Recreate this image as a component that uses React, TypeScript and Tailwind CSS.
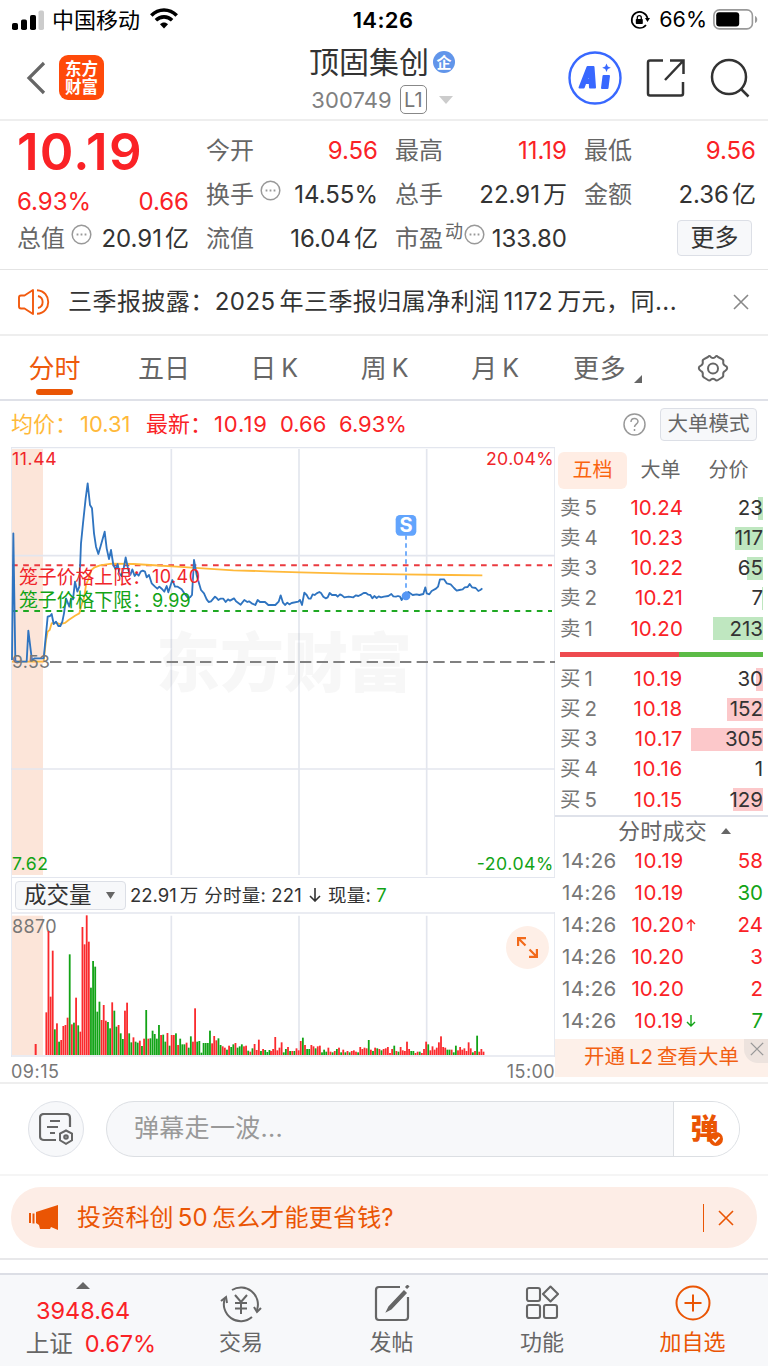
// App.tsx
import React from 'react';

type Cell = { label: string; value: string; unit?: string; red?: boolean; info?: boolean; sup?: string };

const columns: Cell[][] = [
  [
    { label: '今开', value: '9.56', red: true },
    { label: '换手', value: '14.55%', info: true },
    { label: '流值', value: '16.04', unit: '亿' },
  ],
  [
    { label: '最高', value: '11.19', red: true },
    { label: '总手', value: '22.91', unit: '万' },
    { label: '市盈', value: '133.80', info: true, sup: '动' },
  ],
];

const asks = [
  { n: '5', price: '10.24', vol: '23', w: 5 },
  { n: '4', price: '10.23', vol: '117', w: 28 },
  { n: '3', price: '10.22', vol: '65', w: 16 },
  { n: '2', price: '10.21', vol: '7', w: 1 },
  { n: '1', price: '10.20', vol: '213', w: 50 },
];

const bids = [
  { n: '1', price: '10.19', vol: '30', w: 7 },
  { n: '2', price: '10.18', vol: '152', w: 36 },
  { n: '3', price: '10.17', vol: '305', w: 72 },
  { n: '4', price: '10.16', vol: '1', w: 0 },
  { n: '5', price: '10.15', vol: '129', w: 30 },
];

const trades = [
  { price: '10.19', vol: '58', up: true, arrow: '' },
  { price: '10.19', vol: '30', up: false, arrow: '' },
  { price: '10.20', vol: '24', up: true, arrow: 'up' },
  { price: '10.20', vol: '3', up: true, arrow: '' },
  { price: '10.20', vol: '2', up: true, arrow: '' },
  { price: '10.19', vol: '7', up: false, arrow: 'down' },
];

// Price line, three units per pixel
const priceLine =
  '36,660 40,280 46,662 50,665 80,665 85,572 96,662 103,655 131,655 143,530 150,528 155,522 161,552 168,545 175,558 181,558 187,545 192,520 198,475 208,500 213,475 219,478 225,425 232,455 238,440 243,310 249,250 257,175 263,130 270,195 276,205 282,280 288,320 295,342 302,318 314,275 320,325 327,357 333,330 340,375 347,388 353,372 358,400 364,408 371,385 377,352 385,390 391,405 397,388 404,408 410,400 416,407 422,395 428,392 435,395 440,412 447,405 455,430 465,440 472,446 478,440 486,447 493,455 500,438 505,457 517,420 525,440 533,440 545,448 553,460 565,475 570,472 576,465 582,360 590,405 597,430 603,450 612,460 620,478 626,486 633,484 645,470 650,474 655,480 661,476 670,476 677,486 684,478 690,482 702,475 708,484 722,494 733,480 742,486 747,484 755,490 766,495 773,480 780,486 795,486 805,495 826,495 836,485 842,466 849,488 855,495 862,488 868,493 875,489 895,485 900,480 906,495 913,458 920,465 926,476 932,476 938,463 944,465 950,460 958,456 963,459 970,470 977,475 983,472 989,459 996,465 1008,465 1013,470 1020,463 1026,466 1033,472 1046,470 1060,472 1068,466 1075,468 1085,463 1091,459 1098,459 1105,464 1111,465 1117,475 1123,468 1130,474 1136,469 1143,472 1152,470 1165,468 1174,462 1180,469 1188,470 1194,468 1200,470 1205,480 1212,465 1225,456 1238,465 1250,463 1258,465 1270,462 1276,442 1280,460 1288,463 1295,453 1308,446 1314,440 1320,418 1332,418 1340,430 1352,433 1362,444 1370,452 1378,450 1388,448 1394,442 1403,441 1409,432 1416,442 1427,444 1435,453 1441,450 1447,445';

const avgLine =
  '36,665 131,665 138,600 143,575 149,570 155,550 168,548 180,552 195,549 206,540 225,527 238,520 246,490 252,475 258,435 266,415 274,390 284,382 300,376 335,371 400,372 450,375 530,380 620,386 700,391 800,394 900,397 1050,401 1200,403 1350,405 1447,406';

// Volume bars: colour letter followed by height
const volumeA =
  'r128 r372 r175 r313 g77 r95 g40 r45 r87 r90 r112 g302 r92 g97 r172 g89 r70 r384 r332 r419 r340 g202 g282 g265 g130 g160 r105 r150 r103 g99 g80 r158 g133 g85 r90 g65 g48 r133 r157 g65 g38 r53 g40 g37 r43 g27 r49 g135 r49 g50 g73 g63 g49 g90 r60 g61 g40 r66 g28 r60 r60 g65 r30 g49 g32 g32 r37 g22 g56 r40 r140 g40 g42 g7 g36 g36 g36 g73 r35 r57 r44 g50 g30 r26 r22 g16 r28 g24 g32 r36 g22 g26 g32 r26 r28 g13 r10 g20 r33 r15 r46 g12 r18 g15 g9 g15';
const volumeB =
  'r12 r18 r54 r14 r22 r38 g8 g18 r24 g12 r12 g12 r20 r14 r42 g52 r30 g18 g18 r30 r26 g20 r26 r28 g8 g16 g10 r22 r10 g8 r12 g18 r22 g8 r16 g8 r12 g8 r12 r14 r10 g8 r24 r18 r22 r20 g45 r16 g12 r22 g20 r18 g14 r18 r20 r24 r6 r18 g28 r12 g10 r24 r14 r12 r40 r18 g12 g12 r6 r10 g10 r6 r18 r40 g32 r14 r26 r16 r22 r38 r56 r24 r22 g16 g16 r16 g8 g28 r14 r24 r16 r20 r12 r38 r20 g8 r12 g58 r10 r18 r10';

const Bars = ({ data, start }: { data: string; start: number }) => (
  <>
    {data.split(' ').map((bar, i) => {
      const h = Number(bar.slice(1));
      return (
        <rect key={i} x={start + i * 6.375 - 2.7} y={585 - h} width={5.4} height={h} fill={bar[0] === 'r' ? '#fa2a2d' : '#12a316'} />
      );
    })}
  </>
);

const InfoDot = () => (
  <svg width="21" height="21" viewBox="0 0 21 21" fill="none" stroke="#999" strokeWidth="1.5">
    <circle cx="10.5" cy="10.5" r="9.3" />
    <path d="M5.6 10.5h1.8M9.6 10.5h1.8M13.6 10.5h1.8" strokeWidth="1.9" />
  </svg>
);

const Cross = ({ size, color }: { size: number; color: string }) => (
  <svg width={size} height={size} viewBox="0 0 16 16" stroke={color} strokeWidth="1.6" fill="none">
    <path d="M1 1l14 14M15 1L1 15" />
  </svg>
);

const QuoteCell = ({ label, value, unit, red, info, sup }: Cell) => (
  <div className="flex h-11 items-center justify-between">
    <div className="flex items-center text-[#666]">
      <span>{label}</span>
      {sup && <span className="-mt-3.5 ml-0.5 text-[18px]">{sup}</span>}
      {info && <span className={sup ? '-mt-2.5 ml-px' : '-mt-2.5 ml-1.5'}><InfoDot /></span>}
    </div>
    <div className={red ? 'text-[#fa2226]' : 'text-[#333]'}>
      {value}
      {unit && <span className="ml-[3px]">{unit}</span>}
    </div>
  </div>
);

const StatusBar = () => (
  <div className="flex h-10 items-center justify-between pr-2.5 pl-3 text-black">
    <div className="flex w-[300px] items-center">
      <svg width="32" height="21" viewBox="0 0 32 21">
        <rect x="0" y="13" width="6" height="7" rx="1.8" />
        <rect x="9" y="9.500" width="6" height="10.500" rx="1.8" />
        <rect x="18" y="5" width="6" height="15" rx="1.8" />
        <rect x="26.500" y="0.500" width="5.500" height="19.500" rx="1.800" fill="#ccc" />
      </svg>
      <span className="ml-2 text-[22px]">中国移动</span>
      <svg className="-mt-1 ml-2.5" width="28" height="21" viewBox="0 0 28 21" fill="none" stroke="#000" strokeWidth="3.600">
        <path d="M1.300 7.500C8.500 0.200 19.500 0.200 26.700 7.500" />
        <path d="M5.900 12.200c4.700-4.400 11.500-4.400 16.200 0" />
        <path d="M10 16.200c2.400-2.200 5.600-2.200 8 0L14 20.500z" fill="#000" stroke="none" />
      </svg>
    </div>
    <div className="-ml-1 text-[22px] font-semibold tracking-[0.4px]">14:26</div>
    <div className="flex w-[300px] items-center justify-end">
      <svg width="20" height="20" viewBox="0 0 20 20" fill="none" stroke="#000" strokeWidth="1.700">
        <path d="M17.500 8A8 8 0 1 0 16 15" />
        <path d="M15 8h5l-2.500 4z" fill="#000" stroke="none" />
        <rect x="5.800" y="9" width="7" height="5" rx="0.800" fill="#000" stroke="none" />
        <path d="M7.300 9.500V7.700a2 2 0 0 1 4 0v1.800" strokeWidth="1.300" />
      </svg>
      <span className="ml-[9px] text-[21.500px]">66%</span>
      <svg className="-mt-0.5 ml-1.5" width="45" height="21" viewBox="0 0 45 21">
        <rect x="0.900" y="0.900" width="38.500" height="19" rx="5.500" fill="none" stroke="#999" strokeWidth="1.600" />
        <rect x="3.200" y="3.300" width="23" height="14.300" rx="3" />
        <path d="M42 7c3 1 3 6 0 7z" fill="#999" />
      </svg>
    </div>
  </div>
);

const Header = () => (
  <header className="flex h-[81px] items-center justify-between border-b-2 border-[#eee] pr-[18px] pb-1 pl-[26px]">
    <div className="flex w-[230px] items-center">
      <svg width="20" height="34" viewBox="0 0 20 34" fill="none" stroke="#666" strokeWidth="3.200">
        <path d="M18 2L3 17l15 15" />
      </svg>
      <div className="ml-[13px] flex h-[45px] w-[45px] flex-col items-center justify-center rounded-[9px] bg-[#ff4a0a] text-[16.500px] leading-[18px] font-bold text-white">
        <span>东方</span>
        <span>财富</span>
      </div>
    </div>
    <div className="mt-1.5 mr-3 flex flex-col items-center">
      <div className="flex items-center text-[30px] text-[#333]">
        <span>顶固集创</span>
        <span className="ml-1 flex h-[22px] w-[22px] items-center justify-center rounded-full bg-[#6195ea] text-[15px] font-bold text-white">企</span>
      </div>
      <div className="mt-2 flex items-center text-[22px] text-[#808080]">
        <span className="tracking-[0.1px]">300749</span>
        <span className="ml-2 flex h-[29px] w-[27px] items-center justify-center rounded-[5px] border-[1.500px] border-[#888] text-[20px] text-[#777]">L1</span>
        <svg className="ml-3" width="14" height="8" viewBox="0 0 14 8"><path d="M0 0h14L7 8z" fill="#ccc" /></svg>
      </div>
    </div>
    <div className="flex w-[230px] items-center justify-end gap-6">
      <svg width="54" height="54" viewBox="0 0 54 54">
        <circle cx="27" cy="27" r="25.500" fill="#fff" stroke="#3868ff" strokeWidth="2.400" />
        <g fill="#3868ff" stroke="#3868ff" strokeLinejoin="round">
          <path d="M11.500 36.500L19.500 16h6l1.500 20.500h-5l-.2-4.500h-4.500l-1.600 4.500zM18.500 28.500h3.300l-.3-7z" strokeWidth="2" fillRule="evenodd" />
          <path d="M35.500 25h5.500l-1.500 12H34z" strokeWidth="2" />
        </g>
        <path d="M38.500 12.500l1.300 2.900 3 1.300-3 1.300-1.300 3-1.300-3-3-1.300 3-1.300z" fill="#3868ff" />
      </svg>
      <svg width="40" height="40" viewBox="0 0 40 40" fill="none" stroke="#333" strokeWidth="2.500">
        <path d="M17 2.500H4Q2 2.500 2 4.500v31q0 2 2 2h31q2 0 2-2V24" />
        <path d="M24 2.500h13.500V16M37 3L19 22" />
      </svg>
      <svg width="40" height="40" viewBox="0 0 40 40" fill="none" stroke="#333" strokeWidth="2.500">
        <circle cx="19" cy="19" r="17" />
        <path d="M30.500 30.500l8 8" />
      </svg>
    </div>
  </header>
);

const Quote = () => (
  <section className="flex h-[149px] gap-[17px] border-b border-[#e4e4e4] pr-3 pl-[17px] pt-2 text-[24px]">
    <div className="w-[172px] text-[#fa2226]">
      <div className="flex h-[45px] items-center text-[51px] font-semibold tracking-[1.200px]">10.19</div>
      <div className="mt-[7px] flex h-[42px] items-center justify-between">
        <span>6.93%</span>
        <span>0.66</span>
      </div>
      <div className="-mt-1.5">
        <QuoteCell label="总值" value="20.91" unit="亿" info />
      </div>
    </div>
    {columns.map((cells, i) => (
      <div key={i} className="w-[172px]">
        {cells.map((cell) => <QuoteCell key={cell.label} {...cell} />)}
      </div>
    ))}
    <div className="w-[172px]">
      <QuoteCell label="最低" value="9.56" red />
      <QuoteCell label="金额" value="2.36" unit="亿" />
      <div className="flex h-11 items-center justify-end pb-0.5">
        <button className="mr-1 h-9 w-[75px] rounded-[4px] border border-[#dcdfe6] bg-[#f7f8fa] text-[24px] text-[#333]">更多</button>
      </div>
    </div>
  </section>
);

const Notice = () => (
  <div className="flex h-[66px] items-center border-b-2 border-[#eee] pr-[19px] pl-[18px] text-[24px] text-[#333]">
    <svg width="32" height="28" viewBox="0 0 32 28" fill="none" stroke="#f25a0e" strokeWidth="1.900">
      <path d="M15 2v24l-8.500-5.500H3Q1 20.500 1 18.500v-9Q1 7.500 3 7.500h3.500z" strokeLinejoin="round" />
      <path d="M20 8a6.200 6.200 0 0 1 0 12" />
      <path d="M19 2.200c15 1 15 22.600 0 23.600" />
    </svg>
    <span className="ml-[18px] tracking-[0.450px] whitespace-nowrap">
      三季报披露：<span className="mr-1">2025</span>年三季报归属净利润<span className="mx-1">1172</span>万元，同...
    </span>
    <span className="ml-auto"><Cross size={16} color="#888" /></span>
  </div>
);

const Tabs = () => (
  <nav className="flex h-[65px] border-b-2 border-[#dfe1e8] text-[26px] text-[#666]">
    <div className="relative flex w-[109px] items-center justify-center pt-0.5 text-[#ee5a0c]">
      分时
      <span className="absolute bottom-1 h-1.5 w-[37px] rounded-full bg-[#ea5504]" />
    </div>
    <div className="flex w-[110px] items-center justify-center pt-0.5">五日</div>
    {['日', '周', '月'].map((t) => (
      <div key={t} className="flex w-[110.500px] items-center justify-center pt-0.5">
        {t}<span className="ml-[5px] text-[25px]">K</span>
      </div>
    ))}
    <div className="flex w-[91px] items-center justify-end pt-0.5 tracking-[0.800px]">
      更多
      <svg className="mt-5 ml-[7px]" width="8" height="8" viewBox="0 0 8 8"><path d="M8 0v8H0z" fill="#666" /></svg>
    </div>
    <div className="flex flex-1 items-center justify-center pt-0.5 pl-4">
      <svg width="32" height="30" viewBox="0 0 32 30" fill="none" stroke="#666" strokeWidth="2">
        <path d="M11 3q1.500-2 3 .2 2 1.500 4 0 1.500-2.200 3-.2l4 2.200q1.800.8 1.200 3-.2 2.500 2 3.500 2 .6 2 2.300t-2 2.800q-2.300 1-2 3.500.5 2.400-1.200 3.200l-4 2.500q-1.500 1.200-3-.5-2-1.500-4 0-1.500 1.700-3 .5l-4-2.500q-1.700-.8-1.200-3.200.3-2.500-2-3.500-2-1-2-2.800t2-2.300q2.200-1 2-3.500-.6-2.200 1.200-3z" strokeLinejoin="round" />
        <circle cx="16" cy="14.500" r="5" />
      </svg>
    </div>
  </nav>
);

const PriceChart = () => (
  <svg className="block" width="544" height="430" viewBox="33 21 1632 1290">
    <rect x="36" y="27" width="93" height="1278" fill="#fce5d9" />
    <g stroke="#e3e6ee" fill="none">
      <path d="M34 21v1290M1664 21v1290" strokeWidth="3" />
      <path d="M33 22h1632" strokeWidth="5" />
      <path d="M33 347h1632M33 987h1632M514 27v1278M897 27v1278M1280 27v1278" strokeWidth="5" />
    </g>
    <text x="468" y="738" fontSize="192" fontWeight="900" textLength="768" fill="#777" fillOpacity="0.060">东方财富</text>
    <path d="M150 666h1515" stroke="#808080" strokeWidth="6" strokeDasharray="34 16" />
    <path d="M36 376h1620" stroke="#ea3a3f" strokeWidth="6" strokeDasharray="17 16.500" />
    <path d="M36 513h1620" stroke="#1fa823" strokeWidth="6" strokeDasharray="17 16.500" />
    <polyline points={avgLine} fill="none" stroke="#ffb93a" strokeWidth="5.500" />
    <polyline points={priceLine} fill="none" stroke="#2f74c0" strokeWidth="5.500" strokeLinejoin="round" />
    <path d="M1218 286v170" stroke="#5ba0fb" strokeWidth="5" strokeDasharray="13 11" />
    <circle cx="1218" cy="468" r="13" fill="#5597f5" />
    <rect x="1187" y="225" width="62" height="62" rx="13" fill="#62a4fd" />
    <text x="1218" y="277" fontSize="60" fontWeight="700" textAnchor="middle" fill="#fff">S</text>
    <g fontSize="53">
      <text x="36" y="75" textLength="134" fill="#f0252a">11.44</text>
      <text x="1458" y="75" textLength="203" fill="#f0252a">20.04%</text>
      <text x="36" y="683" textLength="114" fill="#777">9.53</text>
      <text x="36" y="1289" textLength="108" fill="#12a316">7.62</text>
      <text x="1430" y="1289" textLength="230" fill="#12a316">-20.04%</text>
      <text x="57" y="431" fontSize="56.500" fill="#f0252a">笼子价格上限：</text>
      <text x="456" y="430" fontSize="54" textLength="144" fill="#f0252a">10.40</text>
      <text x="57" y="501" fontSize="56.500" fill="#12a316">笼子价格下限：</text>
      <text x="456" y="500" fontSize="54" textLength="116" fill="#12a316">9.99</text>
    </g>
  </svg>
);

const VolumeChart = () => (
  <div className="relative">
    <svg className="block" width="544" height="145" viewBox="33 156 1632 435">
      <rect x="36" y="167" width="93" height="418" fill="#fce5d9" />
      <g stroke="#e3e6ee" fill="none">
        <path d="M34 156v435M1664 156v435" strokeWidth="3" />
        <path d="M33 159h1632M33 588h1632M514 167v420M897 167v420M1280 167v420" strokeWidth="5" />
      </g>
      <text x="36" y="220" fontSize="54" textLength="134" fill="#777">8870</text>
      <rect x="104" y="552" width="6" height="33" fill="#fa2a2d" />
      <Bars data={volumeA} start={139} />
      <Bars data={volumeB} start={813} />
    </svg>
    <button className="absolute top-3.5 right-1.5 flex h-[43px] w-[43px] items-center justify-center rounded-full bg-[#feefe7]">
      <svg width="21" height="21" viewBox="0 0 21 21" fill="none" stroke="#f26a1b" strokeWidth="2.200">
        <path d="M1.100 9V1.100H9M1.500 1.500l7 7M12 19.900h7.900V12M19.500 19.500l-7-7" />
      </svg>
    </button>
  </div>
);

const priceTracking = (price: string) => (price.includes('.1') ? 'tracking-[0.700px]' : 'tracking-[0.100px]');

const BookRow = ({ side, n, price, vol, w }: { side: string; n: string; price: string; vol: string; w: number }) => (
  <div className="flex h-[30.200px] items-center text-[20.500px] text-[#777]">
    <span className="w-[51px]">{side}<span className="ml-1">{n}</span></span>
    <span className={`w-[72px] text-right text-[#fa2226] ${priceTracking(price)}`}>{price}</span>
    <div className="relative flex h-[23px] flex-1 items-center justify-end text-[#333]">
      <span className={`absolute right-0 h-full ${side === '卖' ? 'bg-[#bfe7c0]' : 'bg-[#fcc8ca]'}`} style={{ width: w }} />
      <span className="relative">{vol}</span>
    </div>
  </div>
);

const OrderPanel = () => (
  <aside className="w-[213px]">
    <div className="flex h-[46px] items-center pl-[3px] text-[20px] text-[#666]">
      <span className="flex h-[37px] w-[69px] items-center justify-center rounded-md bg-[#ffede4] text-[#fa640f]">五档</span>
      <span className="flex w-[67px] justify-center">大单</span>
      <span className="flex w-[69px] justify-center">分价</span>
    </div>
    <div className="pr-[5px] pl-[5px]">
      {asks.map((r) => <BookRow key={r.n} side="卖" {...r} />)}
      <div className="mt-2 mb-[7px] flex h-[5px]">
        <span className="w-[119px] bg-[#ee4a4f]" />
        <span className="flex-1 bg-[#5cbb47]" />
      </div>
      {bids.map((r) => <BookRow key={r.n} side="买" {...r} />)}
    </div>
    <div className="flex h-[30px] items-center justify-center border-t-2 border-[#dfe2ea] pl-[26px] text-[22px] text-[#666]">
      <span className="tracking-[0.300px]">分时成交</span>
      <svg className="ml-3.5" width="10" height="6" viewBox="0 0 10 6"><path d="M0 6h10L5 0z" fill="#666" /></svg>
    </div>
    {trades.map((t, i) => (
      <div key={i} className="flex h-8 items-center pr-[5px] pl-[7px] text-[20.500px]">
        <span className="w-[53px] tracking-[0.400px] text-[#777]">14:26</span>
        <span className={`w-[69px] text-right text-[#fa2226] ${priceTracking(t.price)}`}>{t.price}</span>
        <span className="w-3 pl-0.5">
          {t.arrow && (
            <svg width="10" height="12" viewBox="0 0 10 12" fill="none" strokeWidth="1.400" stroke={t.arrow === 'up' ? '#fa2226' : '#12a316'}>
              <path d={t.arrow === 'up' ? 'M5 12V1M1 5l4-4 4 4' : 'M5 0v11M1 7l4 4 4-4'} />
            </svg>
          )}
        </span>
        <span className={`flex-1 text-right ${t.up ? 'text-[#fa2226]' : 'text-[#12a316]'}`}>{t.vol}</span>
      </div>
    ))}
    <div className="relative mt-0.5 flex h-[38px] items-center justify-center bg-[#fdf0e9] pb-0.5 text-[20.500px] text-[#f26012]">
      <span>开通<span className="mx-1">L2</span>查看大单</span>
      <span className="absolute top-0 right-0 flex h-6 w-6 items-center justify-center rounded-bl-[14px] bg-[#ede3de] pb-1 pl-0.5">
        <Cross size={14} color="#999" />
      </span>
    </div>
  </aside>
);

const Market = () => (
  <section className="h-[683px] border-b-2 border-[#eee]">
    <div className="flex h-[46px] items-center pr-[11px] pl-[11px] text-[22px] text-[#fa2226]">
      <span className="w-[135px] whitespace-nowrap text-[#ffb93a]"><span className="mr-[3px]">均价：</span>10.31</span>
      <span className="w-[134px] whitespace-nowrap"><span className="mr-0.5">最新：</span><span className="tracking-[0.900px]">10.19</span></span>
      <span className="w-[59px]">0.66</span>
      <span>6.93%</span>
      <svg className="mr-3.5 ml-auto" width="23" height="23" viewBox="0 0 23 23" fill="none" stroke="#999" strokeWidth="1.500">
        <circle cx="11.500" cy="11.500" r="10.500" />
        <path d="M8 9c0-4.500 7-4.500 7-.5 0 2.500-3.500 2.800-3.500 5.500M11.500 16v2" />
      </svg>
      <span className="flex h-[33px] w-[97px] items-center justify-center rounded-[4px] border border-[#dcdfe6] bg-[#f7f8fa] text-[20.500px] text-[#666]">大单模式</span>
    </div>
    <div className="flex">
      <div className="w-[555px] pl-[11px]">
        <PriceChart />
        <div className="flex h-[35px] items-center border-t border-l border-[#e3e6ee] pl-[3px] text-[18.500px] whitespace-nowrap text-[#333]">
          <span className="flex h-[29px] w-[111px] items-center justify-between rounded-[4px] border border-[#dcdfe6] bg-[#f7f8fa] pr-2.5 pl-2 text-[22.500px]">
            成交量
            <svg width="9" height="7" viewBox="0 0 9 7"><path d="M0 0h9L4.500 7z" fill="#666" /></svg>
          </span>
          <span className="ml-1">22.91<span className="ml-[3px]">万</span></span>
          <span className="ml-1.5 tracking-[0.200px]">分时量: 221</span>
          <svg className="mx-[7px]" width="12" height="14" viewBox="0 0 12 14" fill="none" stroke="#333" strokeWidth="1.600"><path d="M6 0v13M1 8l5 5 5-5" /></svg>
          <span className="tracking-[0.200px]">现量: <span className="text-[#12a316]">7</span></span>
        </div>
        <VolumeChart />
        <div className="flex h-[25px] items-center justify-between pt-1 text-[18px] text-[#777]">
          <span className="tracking-[0.500px]">09:15</span>
          <span className="tracking-[0.400px]">15:00</span>
        </div>
      </div>
      <OrderPanel />
    </div>
  </section>
);

const Barrage = () => (
  <div className="flex h-[92px] items-center border-b-2 border-[#f5f5f5] pr-7 pl-7">
    <div className="flex h-14 w-14 items-center justify-center rounded-full border border-[#dfe2e8] bg-[#f7f8fa]">
      <svg width="34" height="32" viewBox="0 0 34 32" fill="none" stroke="#666" strokeWidth="2.200">
        <path d="M17 27H5q-4 0-4-4V5q0-4 4-4h22q4 0 4 4v9" />
        <path d="M11 8h10M8 14h11M11 20h5" />
        <path d="M27 17.500l6 3.200v6.600l-6 3.500-6-3.500v-6.600z" strokeWidth="2" />
        <circle cx="27" cy="24" r="1.700" />
      </svg>
    </div>
    <div className="ml-[22px] flex h-14 flex-1 overflow-hidden rounded-full border border-[#dcdfe3] bg-[#f7f8fa]">
      <div className="flex flex-1 items-center border-r border-[#dcdfe3] pb-0.5 pl-[27px] text-[25px] tracking-[0.300px] text-[#999]">弹幕走一波...</div>
      <div className="relative flex w-[65px] items-center justify-center bg-white pr-1 text-[28px] font-black text-[#ea5504]">
        弹
        <svg className="absolute right-4 bottom-2.5" width="14" height="14" viewBox="0 0 14 14">
          <circle cx="7" cy="7" r="7" fill="#ea5504" />
          <path d="M3.500 7l2.700 2.700 4.300-4.500" fill="none" stroke="#fff" strokeWidth="1.700" />
        </svg>
      </div>
    </div>
  </div>
);

const Banner = () => (
  <div className="h-[84px] border-b-2 border-[#e8e8ea] px-[11px] pt-[11px]">
    <div className="flex h-[61px] items-center rounded-[30px] bg-[#fdede6] pr-[23px] pl-[18px] text-[24px] text-[#ea5504]">
      <svg width="30" height="25" viewBox="0 0 30 25" fill="#ea5504">
        <path d="M0 8h2v10H0zM3.500 8.500h2v10h-2zM7 7l22-7v25l-7-3-1 2H11l-1-4-3-2z" />
      </svg>
      <span className="ml-[18px] tracking-[0.200px]">投资科创<span className="mx-1">50</span>怎么才能更省钱?</span>
      <span className="mr-3.5 ml-auto h-7 w-px bg-[#ea5504]" />
      <Cross size={16} color="#ea5504" />
    </div>
  </div>
);

const BottomNav = () => (
  <footer className="mt-[13px] flex h-[93px] border-t-2 border-[#dcdee5] bg-[#f7f8fa] text-[#666]">
    <div className="flex w-[166px] flex-col items-center pt-[7px] text-[23.500px] text-[#fa2226]">
      <svg width="14" height="7" viewBox="0 0 14 7"><path d="M0 7h14L7 0z" fill="#666" /></svg>
      <span className="mt-2.5">3948.64</span>
      <span className="mt-[9px] ml-4 whitespace-nowrap"><span className="mr-3 text-[#666]">上证</span>0.67%</span>
    </div>
    <div className="flex w-[150px] flex-col items-center pt-2.5">
      <svg width="42" height="38" viewBox="0 0 42 38" fill="none" stroke="#666" strokeWidth="2">
        <path d="M12 5A17 17 0 0 1 37 25M32 32A17 17 0 0 1 5 13" />
        <path d="M1 16l5-4 1 6M41 23l-4 4-3-5M15 10l6 7 6-7M21 17v12M15 18h12M15 23.500h12" />
      </svg>
      <span className="mt-2 text-[22px]">交易</span>
    </div>
    <div className="flex w-[151px] flex-col items-center pt-[10px]">
      <svg width="36" height="37" viewBox="0 0 36 37" fill="none" stroke="#666" strokeWidth="2.200">
        <path d="M26 2H5Q2 2 2 5v27q0 3 3 3h26q3 0 3-3V12" />
        <path d="M30 6l-15 16-2 4 4-2L32 8z" fill="#666" strokeWidth="1.500" />
        <path d="M32 3l2.500-2.500" strokeWidth="3" />
      </svg>
      <span className="mt-[9px] text-[22px]">发帖</span>
    </div>
    <div className="flex w-[150px] flex-col items-center pt-[10px]">
      <svg width="34" height="36" viewBox="0 0 34 36" fill="none" stroke="#666" strokeWidth="2.100">
        <rect x="2" y="3" width="13" height="13" rx="2" />
        <rect x="2" y="20" width="13" height="13" rx="2" />
        <rect x="19" y="20" width="13" height="13" rx="2" />
        <path d="M25.500 1.500L33 9l-7.500 7.500L18 9z" strokeLinejoin="round" />
      </svg>
      <span className="mt-[10px] text-[22px]">功能</span>
    </div>
    <div className="flex w-[151px] flex-col items-center pt-[10px] text-[#ea5504]">
      <svg width="36" height="36" viewBox="0 0 36 36" fill="none" stroke="#ea5504" strokeWidth="2">
        <circle cx="18" cy="18" r="16.500" />
        <path d="M18 9.500v17M9.500 18h17" />
      </svg>
      <span className="mt-[10px] text-[22px]">加自选</span>
    </div>
  </footer>
);

const App = () => (
  <main className="h-[1366px] w-[768px] overflow-hidden bg-white font-['Inter','Noto_Sans_CJK_SC',sans-serif] leading-none">
    <StatusBar />
    <Header />
    <Quote />
    <Notice />
    <Tabs />
    <Market />
    <Barrage />
    <Banner />
    <BottomNav />
  </main>
);

export default App;
